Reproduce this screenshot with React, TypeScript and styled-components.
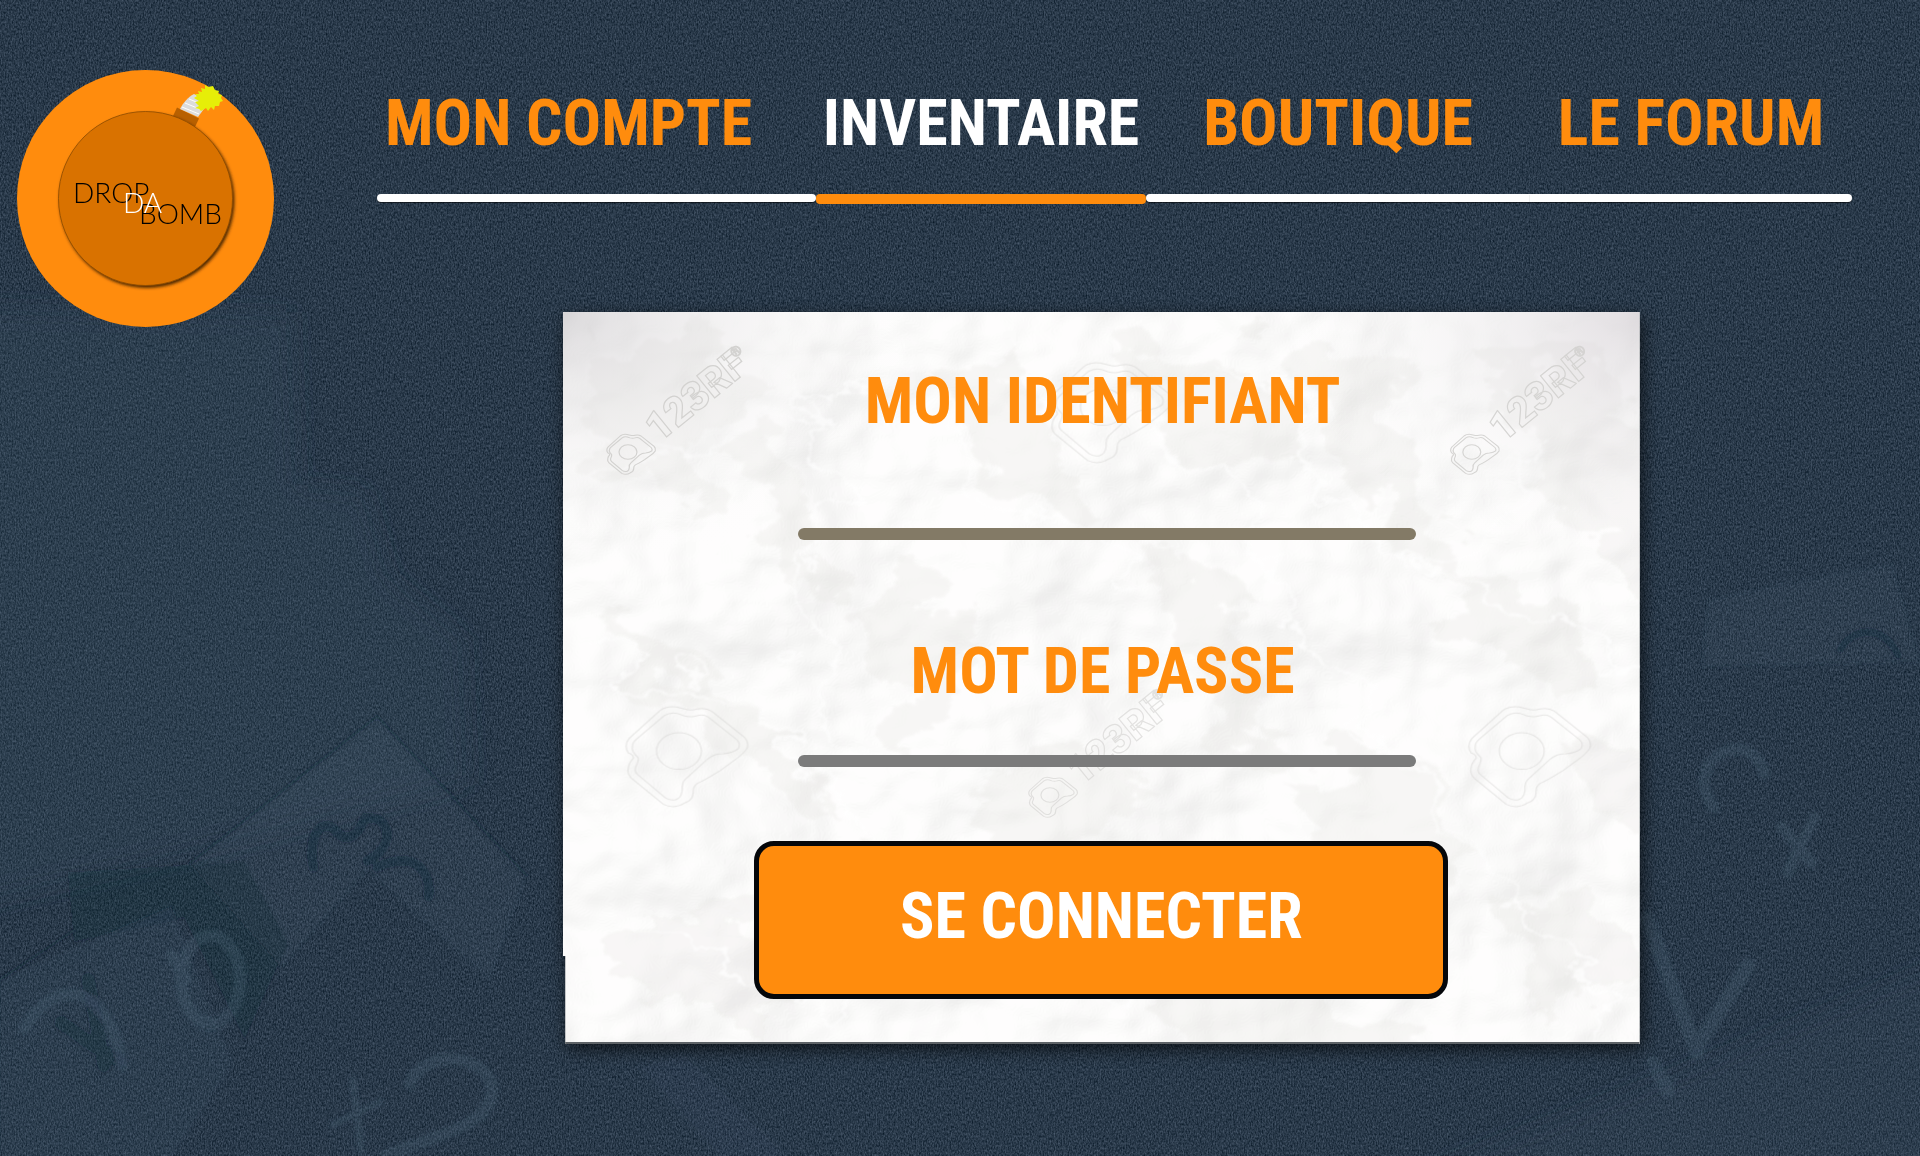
import React from "react";
import styled, { createGlobalStyle } from "styled-components";

const orange = "#ff8c0d";
const display = `"Roboto Condensed", "Liberation Sans Narrow", "DejaVu Sans Condensed", sans-serif`;

const GlobalStyle = createGlobalStyle`
  * { box-sizing: border-box; }
  body { margin: 0; background: #2b3b4c; font-family: ${display}; }
`;

const Page = styled.div`
  position: relative;
  min-height: 100vh;
  overflow: hidden;
  display: grid;
  grid-template-columns: 257px 1fr;
  column-gap: 103px;
  align-items: start;
  padding: 70px 68px 112px 17px;
`;

const Backdrop = styled.svg`
  position: absolute;
  inset: 0;
  width: 100%;
  height: 100%;
`;

const LogoLink = styled.a`
  position: relative;
  display: block;
  svg { display: block; width: 100%; }
`;

const Main = styled.main`
  position: relative;
`;

const Nav = styled.nav`
  display: grid;
  grid-template-columns: 439fr 330fr 384fr 322fr;
  height: 134px;
`;

const NavLink = styled.a<{ $active?: boolean; $start?: boolean; $end?: boolean }>`
  display: flex;
  flex-direction: column;
  justify-content: space-between;
  padding-top: 14px;
  font-size: 64px;
  line-height: 80px;
  font-weight: 700;
  text-align: center;
  white-space: nowrap;
  text-decoration: none;
  color: ${(p) => (p.$active ? "#fff" : orange)};

  &:first-child {
    text-align: left;
    text-indent: 8px;
  }
  &::after {
    content: "";
    height: ${(p) => (p.$active ? 10 : 8)}px;
    margin-bottom: ${(p) => (p.$active ? 0 : 2)}px;
    background: ${(p) => (p.$active ? orange : "#fff")};
    border-radius: ${(p) => (p.$start ? "4px" : "0")} ${(p) => (p.$end ? "4px 4px" : "0 0")} ${(p) => (p.$start ? "4px" : "0")};
    box-shadow: ${(p) => (p.$active ? "none" : "0 1px 1px rgba(0, 0, 0, 0.6)")};
  }
`;

const Panel = styled.form`
  position: relative;
  width: 73%;
  margin: 108px 0 0 12.6%;
  padding: 50px 0 45px;
  display: flex;
  flex-direction: column;
  align-items: center;
`;

const Paper = styled.svg`
  position: absolute;
  inset: 0;
  width: 100%;
  height: 100%;
  filter: drop-shadow(3px 5px 9px rgba(0, 0, 0, 0.65));
`;

const Field = styled.div<{ $room: number; $line: string }>`
  position: relative;
  display: flex;
  flex-direction: column;
  width: 57.4%;
  margin-left: 1%;

  & + & {
    margin-top: 92px;
  }
  input {
    height: ${(p) => p.$room}px;
  }
  &::after {
    content: "";
    height: 12px;
    border-radius: 6px;
    background: ${(p) => p.$line};
  }
`;

const Label = styled.label`
  padding-right: 8px;
  font-size: 64px;
  line-height: 80px;
  font-weight: 700;
  text-align: center;
  white-space: nowrap;
  color: ${orange};
`;

const TextInput = styled.input`
  width: 100%;
  padding: 0 12px;
  border: 0;
  outline: 0;
  background: transparent;
  font-family: inherit;
  font-size: 28px;
  text-align: center;
  color: #2b3b4c;
`;

const Submit = styled.button`
  position: relative;
  width: 64.5%;
  height: 158px;
  margin-top: 74px;
  padding: 0 0 6px;
  border: 5px solid #05070a;
  border-radius: 20px;
  background: ${orange};
  color: #fff;
  font-family: inherit;
  font-size: 64px;
  line-height: 80px;
  font-weight: 700;
  white-space: nowrap;
  cursor: pointer;
`;

function CameraMark({ x, y, s = 1 }: { x: number; y: number; s?: number }) {
  return (
    <g transform={`translate(${x} ${y}) scale(${0.408 * s} ${0.333 * s})`} strokeWidth={3 / s}>
      <path d="M-46 -122Q-30 -136 -6 -132L14 -126Q29 -120 44 -126Q64 -132 80 -120L160 -42Q172 -27 167 -8Q158 8 138 26L102 58Q60 90 45 97Q34 106 35 125Q34 148 14 156Q-10 176 -38 160L-116 82Q-128 68 -124 50Q-122 34 -112 22Q-110 12 -124 6Q-136 -16 -122 -38Z" />
      <path d="M-36 -106Q-22 -118 -4 -113L12 -106Q29 -100 44 -106Q60 -112 72 -102L142 -34Q152 -22 146 -8Q134 6 108 8Q86 8 70 24L18 82Q6 92 8 118Q6 142 -8 146Q-22 150 -34 140L-100 72Q-110 62 -106 48Q-98 30 -100 20Q-118 0 -114 -14Q-114 -26 -104 -36Z" />
      <circle r="55" />
    </g>
  );
}

function WordMark({ x, y, o }: { x: number; y: number; o: number }) {
  return (
    <g opacity={o}>
      <CameraMark x={x} y={y} s={0.4} />
      <g transform={`translate(${x + 31} ${y - 9}) rotate(-39)`} fontFamily="Roboto, sans-serif" fontWeight="900">
        <text fontSize="40">123RF</text>
        <text x="112" y="-18" fontSize="14" strokeWidth="1">®</text>
      </g>
    </g>
  );
}

const folds = [
  "M0 0H120L170 60L90 70L60 130L0 150Z",
  "M30 60L80 40L130 120L110 170L60 150Z",
  "M150 80L200 120L240 230L200 260L170 170Z",
  "M0 270L60 300L180 380L240 470L120 420Z",
  "M330 20L420 10L470 120L520 180L460 190L390 110Z",
  "M250 250L340 230L380 330L320 420L290 350Z",
  "M520 20L640 0L700 90L640 130L570 90Z",
  "M700 0L790 30L830 150L880 240L820 230L760 130Z",
  "M900 10L1000 0L1040 90L1077 150V260L960 160Z",
  "M560 200L640 260L700 400L650 430L600 320Z",
  "M840 240L960 250L1010 340L900 330Z",
  "M380 440L470 400L560 450L480 500L400 520Z",
  "M20 590L110 560L210 610L170 690L40 650Z",
  "M240 500L380 540L350 590L260 560Z",
  "M690 440L810 400L900 520L830 560L740 520Z",
  "M900 560L990 540L1060 640L960 680Z",
  "M560 660L700 640L830 700L760 732H600Z",
  "M960 380L1077 420V500L1010 470Z",
];

function PaperSheet() {
  return (
    <Paper viewBox="0 0 1077 732" preserveAspectRatio="none" aria-hidden="true">
      <defs>
        <filter id="crumple" x="0" y="0" width="100%" height="100%" colorInterpolationFilters="sRGB">
          <feTurbulence type="fractalNoise" baseFrequency="0.005 0.006" numOctaves="4" seed="21" />
          <feDiffuseLighting surfaceScale="40" lightingColor="#fff" diffuseConstant="1.05">
            <feDistantLight azimuth="215" elevation="60" />
          </feDiffuseLighting>
          <feColorMatrix values="0.1 0 0 0 0.895  0 0.1 0 0 0.894  0 0 0.1 0 0.891  0 0 0 1 0" />
        </filter>
        <filter id="torn" x="-5%" y="-5%" width="110%" height="110%">
          <feTurbulence type="fractalNoise" baseFrequency="0.014 0.022" numOctaves="5" seed="5" />
          <feDisplacementMap in="SourceGraphic" scale="110" xChannelSelector="R" yChannelSelector="G" />
          <feGaussianBlur stdDeviation="1.2" />
        </filter>
        <radialGradient id="cornerLeft" cx="0" cy="0" r="0.36">
          <stop offset="0" stopColor="#c9c6ca" stopOpacity="0.6" />
          <stop offset="0.4" stopColor="#d9d7d9" stopOpacity="0.3" />
          <stop offset="1" stopColor="#fff" stopOpacity="0" />
        </radialGradient>
        <radialGradient id="cornerRight" cx="1" cy="0" r="0.36">
          <stop offset="0" stopColor="#cfc9cf" stopOpacity="0.6" />
          <stop offset="0.4" stopColor="#dddadd" stopOpacity="0.3" />
          <stop offset="1" stopColor="#fff" stopOpacity="0" />
        </radialGradient>
        <clipPath id="sheet">
          <path d="M0 0H1077V732H2V644H0Z" />
        </clipPath>
      </defs>
      <g clipPath="url(#sheet)">
        <rect width="1077" height="732" fill="#fcfcfb" />
        <rect width="1077" height="732" filter="url(#crumple)" />
        <g transform="translate(30 30)">
          <g filter="url(#torn)" fill="#e4e3df" opacity="0.24">
            {folds.map((d) => (
              <path key={d} d={d} />
            ))}
          </g>
          <g filter="url(#torn)" fill="none" stroke="#fff" strokeWidth="4" opacity="0.7">
            <path d="M0 130L130 90L280 60M190 20L240 130L200 260L260 420M330 20L400 160L560 230M480 60L640 130L700 280L830 430" />
            <path d="M640 20L820 240L960 100M830 240L1077 330M0 300L180 380L330 560M20 560L190 660L420 600L560 640M760 380L900 520L1030 700" />
          </g>
        </g>
        <rect width="1077" height="732" fill="url(#cornerLeft)" />
        <rect width="1077" height="732" fill="url(#cornerRight)" />
        <g fill="none" stroke="#d3d2d0" strokeWidth="1.2">
          <WordMark x={65} y={140} o={1} />
          <WordMark x={909} y={140} o={0.9} />
          <WordMark x={487} y={483} o={0.6} />
          <g opacity="0.5">
            <CameraMark x={116} y={439} />
            <CameraMark x={959} y={439} />
            <CameraMark x={540} y={95} />
          </g>
        </g>
        <path d="M0 731H1077" stroke="#5d6266" strokeWidth="2" />
        <path d="M2 644V732" stroke="#8d9195" strokeWidth="1" />
      </g>
    </Paper>
  );
}

function Scenery() {
  return (
    <Backdrop viewBox="0 0 1920 1156" preserveAspectRatio="xMidYMid slice" aria-hidden="true">
      <defs>
        <filter id="grain" x="0" y="0" width="100%" height="100%" colorInterpolationFilters="sRGB">
          <feTurbulence type="fractalNoise" baseFrequency="0.72 0.42" numOctaves="2" seed="3" />
          <feColorMatrix values="0.32 0 0 0 0.004  0.32 0 0 0 0.066  0.34 0 0 0 0.12  0 0 0 0 1" />
        </filter>
        <filter id="soft">
          <feGaussianBlur stdDeviation="1.5" />
        </filter>
        <filter id="wide">
          <feGaussianBlur stdDeviation="10" />
        </filter>
      </defs>
      <rect width="1920" height="1156" filter="url(#grain)" />
      <g transform="scale(1.2245)">
        <g fill="#4a6072" filter="url(#wide)">
          <path d="M-20 250L240 255L245 395L300 400L320 470L380 520L385 640L150 700L-20 740Z" opacity="0.13" />
          <path d="M1360 880L1600 780V980H1100Z" opacity="0.1" />
        </g>
        <g filter="url(#soft)">
          <path d="M155 705L308 585L430 715L400 800L300 710L230 790Z" fill="#5c7488" opacity="0.1" />
          <path d="M55 712L200 703L236 770L200 850L150 750L60 770Z" fill="#101c2a" opacity="0.16" />
          <path d="M0 800L140 740L190 870L130 960H0Z" fill="#4d6c84" opacity="0.1" />
          <path d="M520 870L600 960H660L560 860Z" fill="#5c7488" opacity="0.08" />
          <path d="M1395 490L1450 478L1545 460L1568 540L1390 545Z" fill="#5c7488" opacity="0.1" />
        </g>
        <g fill="none" strokeLinecap="round" strokeLinejoin="round" filter="url(#soft)">
          <path d="M155 705L308 585L430 715M0 800L60 760" stroke="#142130" strokeWidth="2" opacity="0.32" />
          <path d="M256 708C252 690 258 668 272 676C282 690 292 684 298 668C318 665 325 690 300 703M308 708C340 694 352 712 350 732" stroke="#142130" strokeWidth="8" opacity="0.26" />
          <path d="M72 800L85 870M50 835L78 855L98 866" stroke="#142130" strokeWidth="12" opacity="0.18" />
          <g stroke="#587289" opacity="0.2">
            <ellipse cx="172" cy="800" rx="24" ry="36" strokeWidth="10" />
            <path d="M335 885C345 855 400 860 402 890C400 920 360 925 315 944" strokeWidth="10" />
            <path d="M272 918L310 900M288 882L295 940" strokeWidth="6" />
            <path d="M20 840C50 790 90 810 100 870M140 780L152 800" strokeWidth="9" />
            <path d="M1400 660C1370 620 1430 590 1441 632M1455 675L1480 705M1482 668L1460 712" strokeWidth="9" />
            <path d="M1345 750L1386 860M1428 788L1384 858M1350 868L1362 890" strokeWidth="12" />
          </g>
          <path d="M1503 530C1515 510 1540 512 1550 535" stroke="#142130" strokeWidth="6" opacity="0.26" />
        </g>
      </g>
    </Backdrop>
  );
}

function Logo() {
  return (
    <svg viewBox="0 0 257 257" role="img" aria-label="Drop Da Bomb">
      <defs>
        <filter id="bombShadow" x="-10%" y="-10%" width="125%" height="125%">
          <feDropShadow dx="1.5" dy="2" stdDeviation="1.6" floodColor="#3a1e00" floodOpacity="0.9" />
        </filter>
      </defs>
      <circle cx="128.5" cy="128.5" r="128.5" fill={orange} />
      <path d="M160 37.5L182 48.5L178 57L156 46Z" fill="#b86000" />
      <path d="M163 39C166 33 171 27 177 24L192 32L181 47Z" fill="#dcdcdc" />
      <path d="M165 37L182 44M168 33L185 40M172 29L189 36" stroke="#fff" strokeWidth="1" />
      <path d="M188 15L191 17L196 16L198 20L202 21L201 24L205 25L204 28L206 31L203 32L202 36L198 36L197 40L194 37L191 41L189 38L184 41L182 39L178 38L182 36L178 32L182 31L177 28L180 26L178 24L182 24L181 21L185 22L184 18L188 19Z" fill="#e6ee08" />
      <circle cx="128.5" cy="128.5" r="87" fill="#d97200" stroke="#8a4a05" strokeWidth="0.8" filter="url(#bombShadow)" />
      <g fontFamily="Lato, sans-serif" fontWeight="300" fontSize="28">
        <text x="56" y="133" fill="#000">DROP</text>
        <text x="122" y="154" fill="#000">BOMB</text>
        <text x="106" y="143" fill="#fff">DA</text>
      </g>
    </svg>
  );
}

export default function App() {
  return (
    <>
      <GlobalStyle />
      <Page>
        <Scenery />
        <LogoLink href="#accueil">
          <Logo />
        </LogoLink>
        <Main>
          <Nav>
            <NavLink href="#compte" $start $end>MON COMPTE</NavLink>
            <NavLink href="#inventaire" $active $start $end>INVENTAIRE</NavLink>
            <NavLink href="#boutique" $start>BOUTIQUE</NavLink>
            <NavLink href="#forum" $end>LE FORUM</NavLink>
          </Nav>
          <Panel onSubmit={(e) => e.preventDefault()}>
            <PaperSheet />
            <Field $room={86} $line="#837a66">
              <Label htmlFor="identifiant">MON IDENTIFIANT</Label>
              <TextInput id="identifiant" type="text" autoComplete="username" />
            </Field>
            <Field $room={43} $line="#7b7b7b">
              <Label htmlFor="passe">MOT DE PASSE</Label>
              <TextInput id="passe" type="password" autoComplete="current-password" />
            </Field>
            <Submit type="submit">SE CONNECTER</Submit>
          </Panel>
        </Main>
      </Page>
    </>
  );
}
